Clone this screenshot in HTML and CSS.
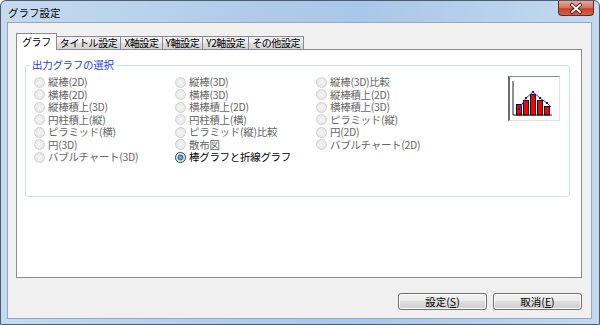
FILE: index.html
```html
<!DOCTYPE html>
<html lang="ja">
<head>
    <meta charset="UTF-8">
    <title>グラフ設定</title>
    <link rel="stylesheet" href="styles.css">
</head>
<body>
    <div class="window">
        <div class="titlebar">
            <span class="title">グラフ設定</span>
            <button class="close-btn" type="button">
                <svg width="34" height="13" viewBox="0 0 34 13">
                    <path d="M13 3 L21 10 M21 3 L13 10" stroke="#4a1a1a" stroke-width="3.6" stroke-linecap="square"/>
                    <path d="M13 3 L21 10 M21 3 L13 10" stroke="#fff" stroke-width="1.8" stroke-linecap="square"/>
                </svg>
            </button>
        </div>

        <div class="client">
            <div class="tabs">
                <div class="tab active">グラフ</div>
                <div class="tab">タイトル設定</div>
                <div class="tab">X軸設定</div>
                <div class="tab">Y軸設定</div>
                <div class="tab">Y2軸設定</div>
                <div class="tab">その他設定</div>
            </div>

            <div class="panel">
                <fieldset class="group">
                    <legend>出力グラフの選択</legend>
                    <div class="group-body">
                        <div class="options">
                            <label class="opt"><input type="radio" name="kind">縦棒(2D)</label>
                            <label class="opt"><input type="radio" name="kind">横棒(2D)</label>
                            <label class="opt"><input type="radio" name="kind">縦棒積上(3D)</label>
                            <label class="opt"><input type="radio" name="kind">円柱積上(縦)</label>
                            <label class="opt"><input type="radio" name="kind">ピラミッド(横)</label>
                            <label class="opt"><input type="radio" name="kind">円(3D)</label>
                            <label class="opt"><input type="radio" name="kind">バブルチャート(3D)</label>

                            <label class="opt"><input type="radio" name="kind">縦棒(3D)</label>
                            <label class="opt"><input type="radio" name="kind">横棒(3D)</label>
                            <label class="opt"><input type="radio" name="kind">横棒積上(2D)</label>
                            <label class="opt"><input type="radio" name="kind">円柱積上(横)</label>
                            <label class="opt"><input type="radio" name="kind">ピラミッド(縦)比較</label>
                            <label class="opt"><input type="radio" name="kind">散布図</label>
                            <label class="opt selected"><input type="radio" name="kind" checked>棒グラフと折線グラフ</label>

                            <label class="opt"><input type="radio" name="kind">縦棒(3D)比較</label>
                            <label class="opt"><input type="radio" name="kind">縦棒積上(2D)</label>
                            <label class="opt"><input type="radio" name="kind">横棒積上(3D)</label>
                            <label class="opt"><input type="radio" name="kind">ピラミッド(縦)</label>
                            <label class="opt"><input type="radio" name="kind">円(2D)</label>
                            <label class="opt"><input type="radio" name="kind">バブルチャート(2D)</label>
                        </div>

                        <!-- 選択中のグラフのプレビュー -->
                        <div class="preview">
                            <svg width="49" height="43" viewBox="0 0 49 43">
                                <path d="M3 4 V38 H42" stroke="#222" stroke-width="1" fill="none"/>
                                <g fill="#ff0000" stroke="#000" stroke-width="1">
                                    <rect x="6.5" y="27.5" width="5" height="10.5"/>
                                    <rect x="13.5" y="23.5" width="5" height="14.5"/>
                                    <rect x="20.5" y="17.5" width="5" height="20.5"/>
                                    <rect x="27.5" y="23.5" width="5" height="14.5"/>
                                    <rect x="34.5" y="29.5" width="5" height="8.5"/>
                                </g>
                                <polyline points="9,32 16,21 23,15 30,21 37,26 41,30" fill="none" stroke="#2a2aff" stroke-width="1"/>
                                <g fill="#1010c8">
                                    <rect x="8" y="31" width="2" height="2"/>
                                    <rect x="15" y="20" width="2" height="2"/>
                                    <rect x="22" y="14" width="2" height="2"/>
                                    <rect x="29" y="20" width="2" height="2"/>
                                    <rect x="36" y="25" width="2" height="2"/>
                                </g>
                            </svg>
                        </div>
                    </div>
                </fieldset>
            </div>

            <div class="buttons">
                <button class="btn" type="button">設定(<u>S</u>)</button>
                <button class="btn" type="button">取消(<u>E</u>)</button>
            </div>
        </div>
    </div>
</body>
</html>
```

FILE: styles.css
```css
* {
    box-sizing: border-box;
}

body {
    margin: 0;
    font-family: 'Noto Sans CJK JP', 'Noto Sans', sans-serif;
    font-size: 10.5px;
    background-color: #fff;
}

/* ウィンドウ枠 */
.window {
    width: 600px;
    height: 325px;
    display: flex;
    flex-direction: column;
    padding: 0 7px 5px 6px;
    border: 1px solid #4d5d70;
    border-radius: 6px 6px 0 0;
    background: linear-gradient(to right, #c6daef 0%, #b3cdea 35%, #a9c7e8 60%, #c4d9ef 100%);
}

.titlebar {
    height: 21px;
    display: flex;
    align-items: flex-start;
}

.title {
    padding: 5px 0 0 1px;
    font-size: 10.5px;
    line-height: 13px;
    color: #000;
}

.close-btn {
    margin-left: auto;
    margin-right: -2px;
    width: 36px;
    height: 15px;
    padding: 0;
    border: 1px solid #6a2a22;
    border-top: none;
    border-radius: 0 0 4px 4px;
    background: linear-gradient(#e9a898 0%, #d77a66 45%, #c6432c 55%, #d0614a 100%);
    display: flex;
    align-items: center;
    justify-content: center;
}

.client {
    flex: 1;
    display: flex;
    flex-direction: column;
    padding: 10px 9px 0 8px;
    background-color: #f0f0f0;
    border: 1px solid #93a7bf;
}

/* タブ */
.tabs {
    display: flex;
    align-items: flex-end;
    height: 16px;
    position: relative;
    z-index: 1;
}

.tab {
    height: 13px;
    padding: 0 3px;
    margin-left: -1px;
    border: 1px solid #898c95;
    border-bottom: none;
    background: linear-gradient(#f3f3f3 0%, #ebebeb 50%, #dcdcdc 51%, #d4d4d4 100%);
    font-size: 10px;
    letter-spacing: -0.4px;
    line-height: 12px;
    color: #000;
    white-space: nowrap;
}

.tab.active {
    height: 17px;
    margin: 0 -1px -1px 0;
    padding: 2px 5px 0;
    background: #fff;
    position: relative;
    z-index: 2;
}

.tab.active + .tab {
    margin-left: 0;
}

.panel {
    height: 229px;
    padding: 9px 11px 0 8px;
    background-color: #fff;
    border: 1px solid #898c95;
}

/* グループボックス */
.group {
    margin: 0;
    height: 138px;
    padding: 5px 9px 0 8px;
    border: 1px solid #d5dfe5;
    border-radius: 3px;
}

.group legend {
    margin-left: -4px;
    padding: 0 2px;
    line-height: 12px;
    letter-spacing: -0.3px;
    color: #1d3cf0;
}

.group-body {
    display: flex;
    align-items: flex-start;
}

.options {
    flex: 1;
    display: grid;
    grid-auto-flow: column;
    grid-template-rows: repeat(7, 12.5px);
    grid-template-columns: 141px 141px 1fr;
}

.opt {
    display: flex;
    align-items: center;
    height: 12.5px;
    line-height: 12px;
    letter-spacing: -0.3px;
    color: #666;
    white-space: nowrap;
}

.opt.selected {
    color: #000;
}

.opt input {
    appearance: none;
    -webkit-appearance: none;
    flex: none;
    width: 11px;
    height: 11px;
    margin: 0 3px 0 0;
    border: 1px solid #d2d2d2;
    border-radius: 50%;
    background: radial-gradient(circle, #f6f6f6 0%, #e2e2e2 100%);
}

.opt input:checked {
    border-color: #3a3a3a;
    background: radial-gradient(circle, #8fd8ff 0, #0f6cc8 2.5px, #f4f4f4 3.5px, #e4e4e4 100%);
}

.preview {
    width: 52px;
    height: 45px;
    border-style: solid;
    border-width: 1px 1px 1px 2px;
    border-color: #8a8a8a #e2e2e2 #e2e2e2 #6a6a6a;
    background-color: #fff;
}

.preview svg {
    display: block;
}

/* ボタン */
.buttons {
    display: flex;
    justify-content: flex-end;
    gap: 6px;
    margin-top: 15px;
}

.btn {
    width: 89px;
    height: 17px;
    padding: 0;
    font-family: inherit;
    font-size: 10.5px;
    line-height: 14px;
    color: #000;
    border: 1px solid #707070;
    border-radius: 3px;
    background: linear-gradient(#f2f2f2 0%, #ebebeb 49%, #dddddd 50%, #cfcfcf 100%);
    box-shadow: inset 0 0 0 1px #fbfbfb;
}

.btn u {
    text-decoration-thickness: 1px;
}
```
